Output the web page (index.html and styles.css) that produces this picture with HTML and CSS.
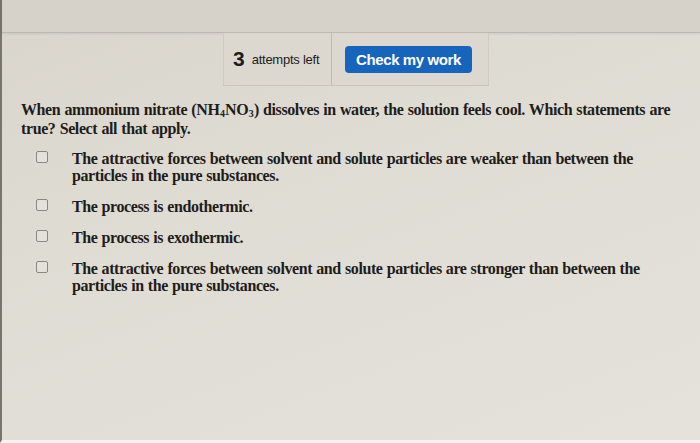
FILE: index.html
```html
<!DOCTYPE html>
<html>
<head>
<meta charset="utf-8">
<link rel="stylesheet" href="styles.css">
</head>
<body>
<div class="page">
  <div class="topband"></div>
  <div class="toolbar">
    <div class="attempts"><span class="num">3</span><span class="lbl">attempts left</span></div>
    <div class="check"><button class="btn">Check my work</button></div>
  </div>
  <p class="question">When ammonium nitrate (NH<sub>4</sub>NO<sub>3</sub>) dissolves in water, the solution feels cool. Which statements are true? Select all that apply.</p>
  <ul class="options">
    <li class="opt"><span class="box"></span><span class="txt">The attractive forces between solvent and solute particles are weaker than between the particles in the pure substances.</span></li>
    <li class="opt"><span class="box"></span><span class="txt">The process is endothermic.</span></li>
    <li class="opt"><span class="box"></span><span class="txt">The process is exothermic.</span></li>
    <li class="opt"><span class="box"></span><span class="txt">The attractive forces between solvent and solute particles are stronger than between the particles in the pure substances.</span></li>
  </ul>
</div>
</body>
</html>
```
FILE: styles.css
```css
html, body {
  margin: 0;
  padding: 0;
}
body {
  width: 700px;
  height: 443px;
  overflow: hidden;
  background: #e2dfd7;
}
.page {
  height: 440px;
  border-left: 2px solid #77766c;
  border-bottom: 3px solid #f4f3ef;
  background: linear-gradient(160deg, #d9d5cd 0%, #dfdcd4 40%, #e4e2da 100%);
  box-sizing: content-box;
}
.topband {
  height: 32px;
  background: #d6d2ca;
  border-bottom: 1px solid #bdb9b0;
  box-shadow: 0 1px 2px rgba(0,0,0,0.08);
}
.toolbar {
  display: flex;
  margin-left: 221px;
  width: 266px;
  height: 52px;
  background: #dcd8d0;
  border-bottom: 1px solid #c9c5bc;
}
.attempts {
  width: 109px;
  display: flex;
  align-items: center;
  box-sizing: border-box;
  padding-left: 9px;
  border-right: 1px solid #bebab1;
  border-left: 1px solid #cfcbc2;
  font-family: "Liberation Sans", Arial, sans-serif;
  color: #1d1d1d;
}
.num {
  font-weight: bold;
  font-size: 21px;
  margin-right: 7px;
}
.lbl {
  font-size: 13px;
  letter-spacing: -0.25px;
}
.check {
  flex: 1;
  display: flex;
  align-items: center;
  padding-left: 13px;
  border-right: 1px solid #d0ccc3;
}
.btn {
  width: 127px;
  height: 27px;
  border: none;
  border-radius: 4px;
  background: #1764bd;
  color: #ffffff;
  font-family: "Liberation Sans", Arial, sans-serif;
  font-weight: bold;
  font-size: 15px;
  letter-spacing: -0.4px;
  padding: 0;
}
.question {
  margin: 14px 0 0 19px;
  width: 664px;
  font-family: "Liberation Serif", "Times New Roman", serif;
  font-weight: bold;
  font-size: 16px;
  letter-spacing: -0.4px;
  word-spacing: 0.6px;
  line-height: 19px;
  color: #1f1d1a;
}
.question sub {
  font-size: 10px;
  line-height: 0;
  vertical-align: -2px;
  margin: 0 0.5px;
}
.options {
  list-style: none;
  margin: 12px 0 0 0;
  padding: 0 0 0 34px;
}
.opt {
  display: flex;
  align-items: flex-start;
  margin-bottom: 14px;
  font-family: "Liberation Serif", "Times New Roman", serif;
  font-weight: bold;
  font-size: 16px;
  letter-spacing: -0.4px;
  word-spacing: 0.5px;
  line-height: 17px;
  color: #1f1d1a;
}
.box {
  flex: none;
  width: 10px;
  height: 10px;
  margin-top: 1px;
  border: 1.5px solid #8a8780;
  border-radius: 2px;
  margin-right: 24px;
  background: #e4e1da;
}
.txt {
  width: 596px;
}
```
